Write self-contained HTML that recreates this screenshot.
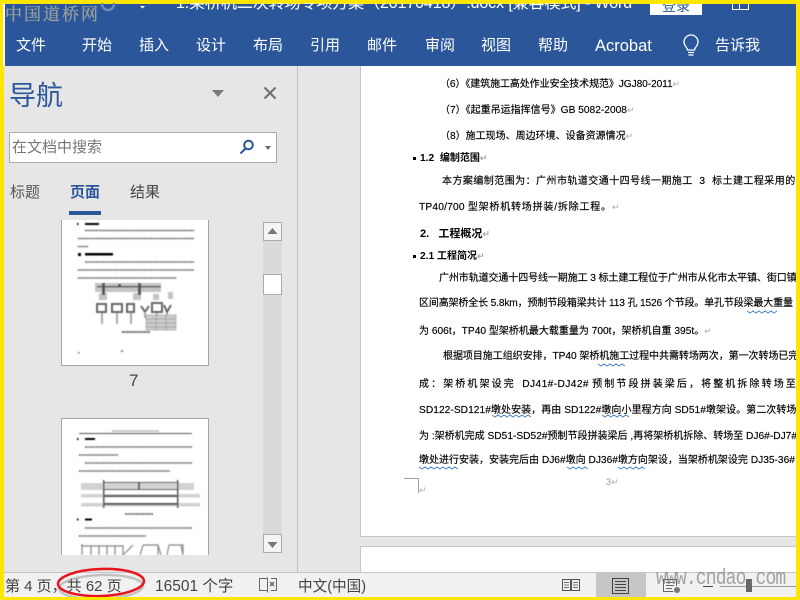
<!DOCTYPE html>
<html lang="zh">
<head>
<meta charset="utf-8">
<title>Word</title>
<style>
html,body{margin:0;padding:0;width:800px;height:600px;overflow:hidden;background:#ffe600;}
body{font-family:"Liberation Sans","Noto Sans CJK SC",sans-serif;position:relative;}
.a{position:absolute;white-space:nowrap;}
#app{position:absolute;left:4px;top:4px;width:792px;height:593px;overflow:hidden;background:#e6e6e6;}
#bar{position:absolute;left:5px;top:4px;width:791px;height:62px;background:#2b579a;}
.tab{position:absolute;top:36px;color:#fff;font-size:15px;line-height:20px;white-space:nowrap;}
.l{position:absolute;white-space:nowrap;font-size:10px;line-height:18px;color:#000;-webkit-text-stroke:.15px #000;}
.l i{font-style:normal;font-size:10.2px;}
.b{font-weight:bold;-webkit-text-stroke:0;}
.m{color:#aaa;font-size:9px;-webkit-text-stroke:0;}
.st{position:absolute;top:577px;color:#444;line-height:20px;white-space:nowrap;}
</style>
</head>
<body>
<div id="app"></div>
<div class="a" style="left:3px;top:3px;width:2px;height:63px;background:#fff;"></div>
<div id="bar"></div>
<div class="a" style="left:176px;top:-8px;color:#fff;font-size:16px;line-height:24px;letter-spacing:-.1px;">1.架桥机二次转场专项方案（20170418）.docx [兼容模式] - Word</div>
<div class="a" style="left:650px;top:4px;width:52px;height:11px;background:#fff;overflow:hidden;"><div style="color:#2b579a;font-size:14px;line-height:14px;text-align:center;margin-top:-5px;">登录</div></div>
<div class="a" style="left:732px;top:4px;width:15px;height:5px;border:1px solid #fff;border-top:0;"></div>
<div class="a" style="left:739px;top:4px;width:1px;height:5px;background:#fff;"></div>
<svg class="a" style="left:139px;top:5px;" width="8" height="4"><path d="M1 1h5L3.500 3.500z" fill="#fff"/></svg>

<div class="tab" style="left:16px;">文件</div>
<div class="tab" style="left:82px;">开始</div>
<div class="tab" style="left:139px;">插入</div>
<div class="tab" style="left:196px;">设计</div>
<div class="tab" style="left:253px;">布局</div>
<div class="tab" style="left:310px;">引用</div>
<div class="tab" style="left:367px;">邮件</div>
<div class="tab" style="left:425px;">审阅</div>
<div class="tab" style="left:481px;">视图</div>
<div class="tab" style="left:538px;">帮助</div>
<div class="tab" style="left:595px;font-size:16.500px;">Acrobat</div>
<div class="tab" style="left:715px;">告诉我</div>
<svg class="a" style="left:682px;top:34px;" width="18" height="24" viewBox="0 0 18 24" fill="none" stroke="#fff" stroke-width="1.300"><path d="M5.500 16C5 13 2 11.500 2 8a7 7 0 0 1 14 0c0 3.500-3 5-3.500 8z"/><path d="M6 18.500h6M6.500 21h5"/></svg>

<!-- nav panel -->
<div class="a" style="left:9px;top:79px;color:#2b579a;font-size:27px;line-height:34px;">导航</div>
<svg class="a" style="left:212px;top:89px;" width="13" height="9"><path d="M0 1h12L6 8z" fill="#7a7a7a"/></svg>
<svg class="a" style="left:263px;top:86px;" width="14" height="14"><path d="M1.500 1.500l11 11M12.500 1.500l-11 11" stroke="#6e6e6e" stroke-width="2" fill="none"/></svg>
<div class="a" style="left:9px;top:132px;width:266px;height:29px;background:#fff;border:1px solid #ababab;"></div>
<div class="a" style="left:12px;top:138px;color:#777;font-size:15px;line-height:20px;">在文档中搜索</div>
<svg class="a" style="left:239px;top:139px;" width="16" height="16" fill="none" stroke="#2b579a" stroke-width="2"><circle cx="9.500" cy="6" r="4.300"/><path d="M6.500 9.500L1.500 14.500"/></svg>
<svg class="a" style="left:264px;top:145px;" width="8" height="6"><path d="M1 1h6L4 5z" fill="#666"/></svg>

<div class="a" style="left:10px;top:183px;color:#555;font-size:15px;line-height:20px;">标题</div>
<div class="a" style="left:70px;top:183px;color:#2b579a;font-size:15px;line-height:20px;font-weight:bold;">页面</div>
<div class="a" style="left:130px;top:183px;color:#444;font-size:15px;line-height:20px;">结果</div>
<div class="a" style="left:69px;top:211px;width:32px;height:4px;background:#2b579a;"></div>

<!-- thumb 1 -->
<svg class="a" style="left:61px;top:220px;" width="148" height="146" viewBox="0 0 148 146">
<defs><filter id="bl" x="-5%" y="-5%" width="110%" height="110%"><feGaussianBlur stdDeviation="0.45"/></filter></defs>
<rect width="148" height="146" fill="#fff"/>
<g filter="url(#bl)">
<g fill="#000"><rect x="16" y="3" width="1.500" height="2"/><rect x="24" y="3" width="14" height="2"/><rect x="17" y="33" width="3" height="3"/><rect x="24" y="33" width="28" height="2.500"/></g>
<g stroke="#555" stroke-width="1.500" stroke-dasharray="1.500 .7" fill="none"><path d="M24 10.500H133M17 18.500H133M17 26.500H27M24 42H133M17 50H133M17 58H116"/><path d="M61 112H89" stroke-width="2"/></g>
<g fill="#c4c4c4"><rect x="34" y="63" width="66" height="9"/><rect x="38" y="73" width="8" height="7"/><rect x="72" y="73" width="8" height="7"/><rect x="92" y="74" width="6" height="6"/><rect x="107" y="72" width="5" height="7"/></g>
<g fill="#555"><rect x="36" y="66" width="64" height="1.500"/><rect x="41" y="63" width="3" height="12"/><rect x="77" y="63" width="3" height="12"/><rect x="57" y="64" width="3" height="3"/></g>
<g fill="none" stroke="#666" stroke-width="2"><path d="M36 84h9v8h-9zM51 84h10v8H51zM66 84h7v8h-7z"/><path d="M80 86l4 6 4-6M103 85l3 7 4-7"/><path d="M91 83h10v9H91z"/></g>
<g stroke="#aaa" stroke-width="2"><path d="M41 93v11M56 93v11M70 93v11M84 92v6M96 93v5M106 93v6"/></g>
<g fill="#ccc" stroke="#999" stroke-width=".6"><rect x="85" y="95" width="30" height="15"/></g>
<path d="M85 99h30M85 103h30M85 107h30M95 95v15M105 95v15" stroke="#999" stroke-width=".7"/>
<rect x="60" y="130" width="2" height="2" fill="#888"/><rect x="17" y="132" width="1.500" height="1.500" fill="#666"/>
</g>
<path d="M.5 0V145.500H147.500V0" fill="none" stroke="#a3a6ab"/>
</svg>
<div class="a" style="left:129px;top:371px;color:#444;font-size:17px;line-height:20px;">7</div>

<!-- thumb 2 -->
<svg class="a" style="left:61px;top:418px;" width="148" height="137" viewBox="0 0 148 137">
<rect width="148" height="137" fill="#fff"/>
<g filter="url(#bl)">
<rect x="18" y="15" width="113" height="1" fill="#555"/>
<path d="M51 13H98" stroke="#999" stroke-width="1.500" stroke-dasharray="1.500 .7"/>
<g fill="#000"><rect x="16" y="20" width="1.500" height="2"/><rect x="24" y="20" width="10" height="2"/><rect x="16" y="100.500" width="1.500" height="2"/><rect x="24" y="100.500" width="7" height="2"/></g>
<g stroke="#555" stroke-width="1.500" stroke-dasharray="1.500 .7" fill="none"><path d="M24 29H131M18 37H57M24 45H131M18 53H109M24 110H131M18 118H85"/><path d="M64 96H92" stroke-width="1.800"/></g>
<g fill="#d2d2d2"><rect x="20" y="65" width="113" height="7"/><rect x="20" y="76" width="119" height="3.500"/><rect x="20" y="85" width="119" height="3.500"/></g>
<g fill="#555"><rect x="42" y="64" width="74" height="1"/><rect x="42" y="71" width="74" height="1"/><rect x="42" y="77" width="74" height="2"/><rect x="42" y="85" width="74" height="2"/><rect x="42" y="62" width="1.500" height="28"/><rect x="116" y="62" width="1.500" height="28"/><rect x="77" y="65" width="2" height="7"/><rect x="77" y="77" width="3" height="2"/></g>
<path d="M20 128H62M21 126v11M30 127v10M38 127v10M46 127v10M54 127v10M62 127v10M62 137l10-10M82 127h15v10M82 127l-3 10M97 127l3 10M108 127h14v10M108 127l-2 10M120 127l2 10" stroke="#888" stroke-width="1.200" fill="none"/>
</g>
<path d="M.5 137V.5H147.500V137" fill="none" stroke="#a3a6ab"/>
</svg>

<!-- scrollbar -->
<div class="a" style="left:263px;top:222px;width:19px;height:331px;background:#dadada;"></div>
<div class="a" style="left:263px;top:222px;width:17px;height:17px;background:#f4f4f4;border:1px solid #ababab;"></div>
<svg class="a" style="left:267px;top:227px;" width="11" height="8"><path d="M5.500 1L10.500 7H.5z" fill="#777"/></svg>
<div class="a" style="left:263px;top:274px;width:17px;height:19px;background:#fff;border:1px solid #ababab;"></div>
<div class="a" style="left:263px;top:534px;width:17px;height:17px;background:#f4f4f4;border:1px solid #ababab;"></div>
<svg class="a" style="left:267px;top:541px;" width="11" height="8"><path d="M5.500 7L10.500 1H.5z" fill="#777"/></svg>
<div class="a" style="left:297px;top:66px;width:1px;height:507px;background:#c0c0c0;"></div>

<!-- document -->
<div class="a" style="left:360px;top:66px;width:436px;height:471px;background:#fff;border-left:1px solid #c6c6c6;border-bottom:1px solid #c6c6c6;box-sizing:border-box;"></div>
<div class="a" style="left:360px;top:546px;width:436px;height:27px;background:#fff;border-left:1px solid #c6c6c6;border-top:1px solid #c6c6c6;box-sizing:border-box;"></div>

<div class="a" style="left:0;top:0;width:796px;height:600px;overflow:hidden;">
<div class="l" style="left:440px;top:75px;letter-spacing:-.1px;">（<i>6</i>）《建筑施工高处作业安全技术规范》<i>JGJ80-2011</i><span class="m">↵</span></div>
<div class="l" style="left:440px;top:101px;">（<i>7</i>）《起重吊运指挥信号》<i>GB 5082-2008</i><span class="m">↵</span></div>
<div class="l" style="left:440px;top:127px;">（<i>8</i>）施工现场、周边环境、设备资源情况<span class="m">↵</span></div>
<div class="a" style="left:413px;top:157px;width:3px;height:3px;background:#000;"></div>
<div class="l b" style="left:420px;top:149px;"><i>1.2&nbsp; </i>编制范围<span class="m">↵</span></div>
<div class="l" style="left:442px;top:173px;letter-spacing:.45px;">本方案编制范围为：广州市轨道交通十四号线一期施工<i>&nbsp; 3&nbsp; </i>标土建工程采用的</div>
<div class="l" style="left:419px;top:198px;letter-spacing:.8px;"><i style="letter-spacing:.2px;">TP40/700 </i>型架桥机转场拼装<i>/</i>拆除工程。<span class="m">↵</span></div>
<div class="l b" style="left:420px;top:225px;font-size:11px;">2.&nbsp;&nbsp; 工程概况<span class="m">↵</span></div>
<div class="a" style="left:413px;top:255px;width:3px;height:3px;background:#000;"></div>
<div class="l b" style="left:420px;top:247px;"><i>2.1 </i>工程简况<span class="m">↵</span></div>
<div class="l" style="left:439px;top:270px;letter-spacing:-.1px;">广州市轨道交通十四号线一期施工<i> 3 </i>标土建工程位于广州市从化市太平镇、街口镇</div>
<div class="l" style="left:419px;top:295px;letter-spacing:-.15px;">区间高架桥全长<i> 5.8km</i>，预制节段箱梁共计<i> 113 </i>孔<i> 1526 </i>个节段。单孔节段梁最大重量</div>
<div class="l" style="left:419px;top:322px;">为<i> 606t</i>，<i>TP40 </i>型架桥机最大载重量为<i> 700t</i>，架桥机自重<i> 395t</i>。<span class="m">↵</span></div>
<div class="l" style="left:443px;top:348px;letter-spacing:-.05px;">根据项目施工组织安排，<i>TP40 </i>架桥机施工过程中共需转场两次，第一次转场已完</div>
<div class="l" style="left:419px;top:376px;letter-spacing:2.100px;">成：架桥机架设完<i style="letter-spacing:.4px;">&nbsp; DJ41#-DJ42# </i>预制节段拼装梁后，将整机拆除转场至</div>
<div class="l" style="left:419px;top:402px;letter-spacing:.05px;"><i>SD122-SD121#</i>墩处安装，再由<i> SD122#</i>墩向小里程方向<i> SD51#</i>墩架设。第二次转场</div>
<div class="l" style="left:419px;top:428px;">为<i> :</i>架桥机完成<i> SD51-SD52#</i>预制节段拼装梁后<i> ,</i>再将架桥机拆除、转场至<i> DJ6#-DJ7#</i></div>
<div class="l" style="left:419px;top:452px;">墩处进行安装，安装完后由<i> DJ6#</i>墩向<i> DJ36#</i>墩方向架设，当架桥机架设完<i> DJ35-36#</i></div>

<svg class="a" style="left:0;top:0;" width="800" height="600" fill="none" stroke="#4a86c8" stroke-width="1">
<path d="M747 311l3 2 3-2 3 2 3-2 3 2 3-2 3 2 3-2 3 2 3-2"/>
<path d="M598 364l3 2 3-2 3 2 3-2 3 2 3-2 3 2 3-2 3 2"/>
<path d="M492 415l3 2 3-2 3 2 3-2 3 2 3-2 3 2 3-2 3 2 3-2 3 2 3-2 3 2"/><path d="M602 415l3 2 3-2 3 2 3-2 3 2 3-2 3 2 3-2 3 2"/>
<path d="M419 467l3 2 3-2 3 2 3-2 3 2 3-2 3 2 3-2 3 2 3-2 3 2 3-2 3 2"/><path d="M567 467l3 2 3-2 3 2 3-2 3 2 3-2 3 2"/><path d="M618 467l3 2 3-2 3 2 3-2 3 2 3-2 3 2 3-2 3 2"/>
</svg>
<div class="a" style="left:404px;top:478px;width:14px;height:14px;border-right:1px solid #a0a0a0;border-top:1px solid #a0a0a0;"></div>
<div class="l m" style="left:419px;top:483px;line-height:14px;">↵</div>
<div class="l" style="left:606px;top:475px;font-size:9px;color:#999;line-height:14px;-webkit-text-stroke:0;">3<span class="m">↵</span></div>
</div>

<!-- status bar -->
<div class="a" style="left:4px;top:572px;width:792px;height:25px;background:#f1f1f1;border-top:1px solid #c6c6c6;box-sizing:border-box;"></div>
<div class="a" style="left:596px;top:573px;width:50px;height:24px;background:#c6c6c6;"></div>
<div class="st" style="left:5px;font-size:15px;">第 4 页，共 62 页</div>
<div class="st" style="left:155px;font-size:15.500px;">16501 个字</div>
<svg class="a" style="left:258px;top:577px;" width="20" height="16" fill="none" stroke="#666"><path d="M9.500 1.500H1.500V13.500H9.500M9.500 .5V15.500M13 1.500h5.500V13.500H13"/><path d="M12 5l4 4M16 5l-4 4" stroke-width="1.500"/></svg>
<div class="st" style="left:298px;font-size:14.600px;">中文(中国)</div>
<svg class="a" style="left:562px;top:577px;" width="18" height="16" fill="none" stroke="#555"><path d="M.5 2.500h8v11h-8zM9.500 2.500h8v11h-8z"/><path d="M2 5.500h5M2 8h5M2 10.500h5M11 5.500h5M11 8h5M11 10.500h5" stroke="#777"/></svg>
<svg class="a" style="left:612px;top:578px;" width="18" height="16" fill="none" stroke="#444"><rect x=".5" y=".5" width="16" height="15"/><path d="M3 3.500h11M3 6.500h11M3 9.500h11M3 12.500h11"/></svg>
<svg class="a" style="left:663px;top:577px;" width="24" height="18" fill="none" stroke="#666"><rect x=".5" y="2.500" width="13" height="12"/><path d="M3 5.500h8M3 8.500h8M3 11.500h6"/><circle cx="14" cy="13" r="3.500" fill="#777" stroke="#eee"/></svg>
<div class="a" style="left:703px;top:586px;width:10px;height:1px;background:#444;"></div>
<div class="a" style="left:720px;top:586px;width:76px;height:1px;background:#999;"></div>
<div class="a" style="left:746px;top:579px;width:6px;height:13px;background:#666;"></div>

<!-- watermark -->
<div class="a" style="left:656px;top:566px;color:rgba(120,120,120,.65);font-family:'Liberation Mono',monospace;font-size:18px;line-height:26px;transform:scaleY(1.25);letter-spacing:-.85px;">www.cndao.com</div>
<div class="a" style="left:5px;top:2px;color:rgba(165,165,155,.9);font-family:'Noto Serif CJK SC',serif;font-size:17px;line-height:22px;letter-spacing:2px;-webkit-text-stroke:.3px rgba(165,165,155,.9);">中国道桥网</div>
<svg class="a" style="left:100px;top:0;" width="18" height="14" fill="none" stroke="#6e8ab5" stroke-width="2.500"><circle cx="8" cy="4" r="6"/></svg>

<!-- red ellipse -->
<svg class="a" style="left:52px;top:562px;" width="105" height="38" fill="none">
<ellipse cx="49" cy="25" rx="42" ry="12" transform="rotate(-2 49 25)" stroke="#8a8a8a" stroke-width="2.500" opacity=".45"/>
<ellipse cx="49" cy="20.500" rx="43" ry="13.500" transform="rotate(-2 49 20.500)" stroke="#e8141c" stroke-width="2.500"/>
</svg>

<div class="a" style="left:0;top:0;width:800px;height:3px;background:#ffe600;"></div>
<div class="a" style="left:0;top:0;width:3px;height:600px;background:#ffe600;"></div>
<div class="a" style="left:796px;top:0;width:4px;height:600px;background:#ffe600;"></div>
<div class="a" style="left:0;top:597px;width:800px;height:3px;background:#ffe600;"></div>
</body>
</html>
